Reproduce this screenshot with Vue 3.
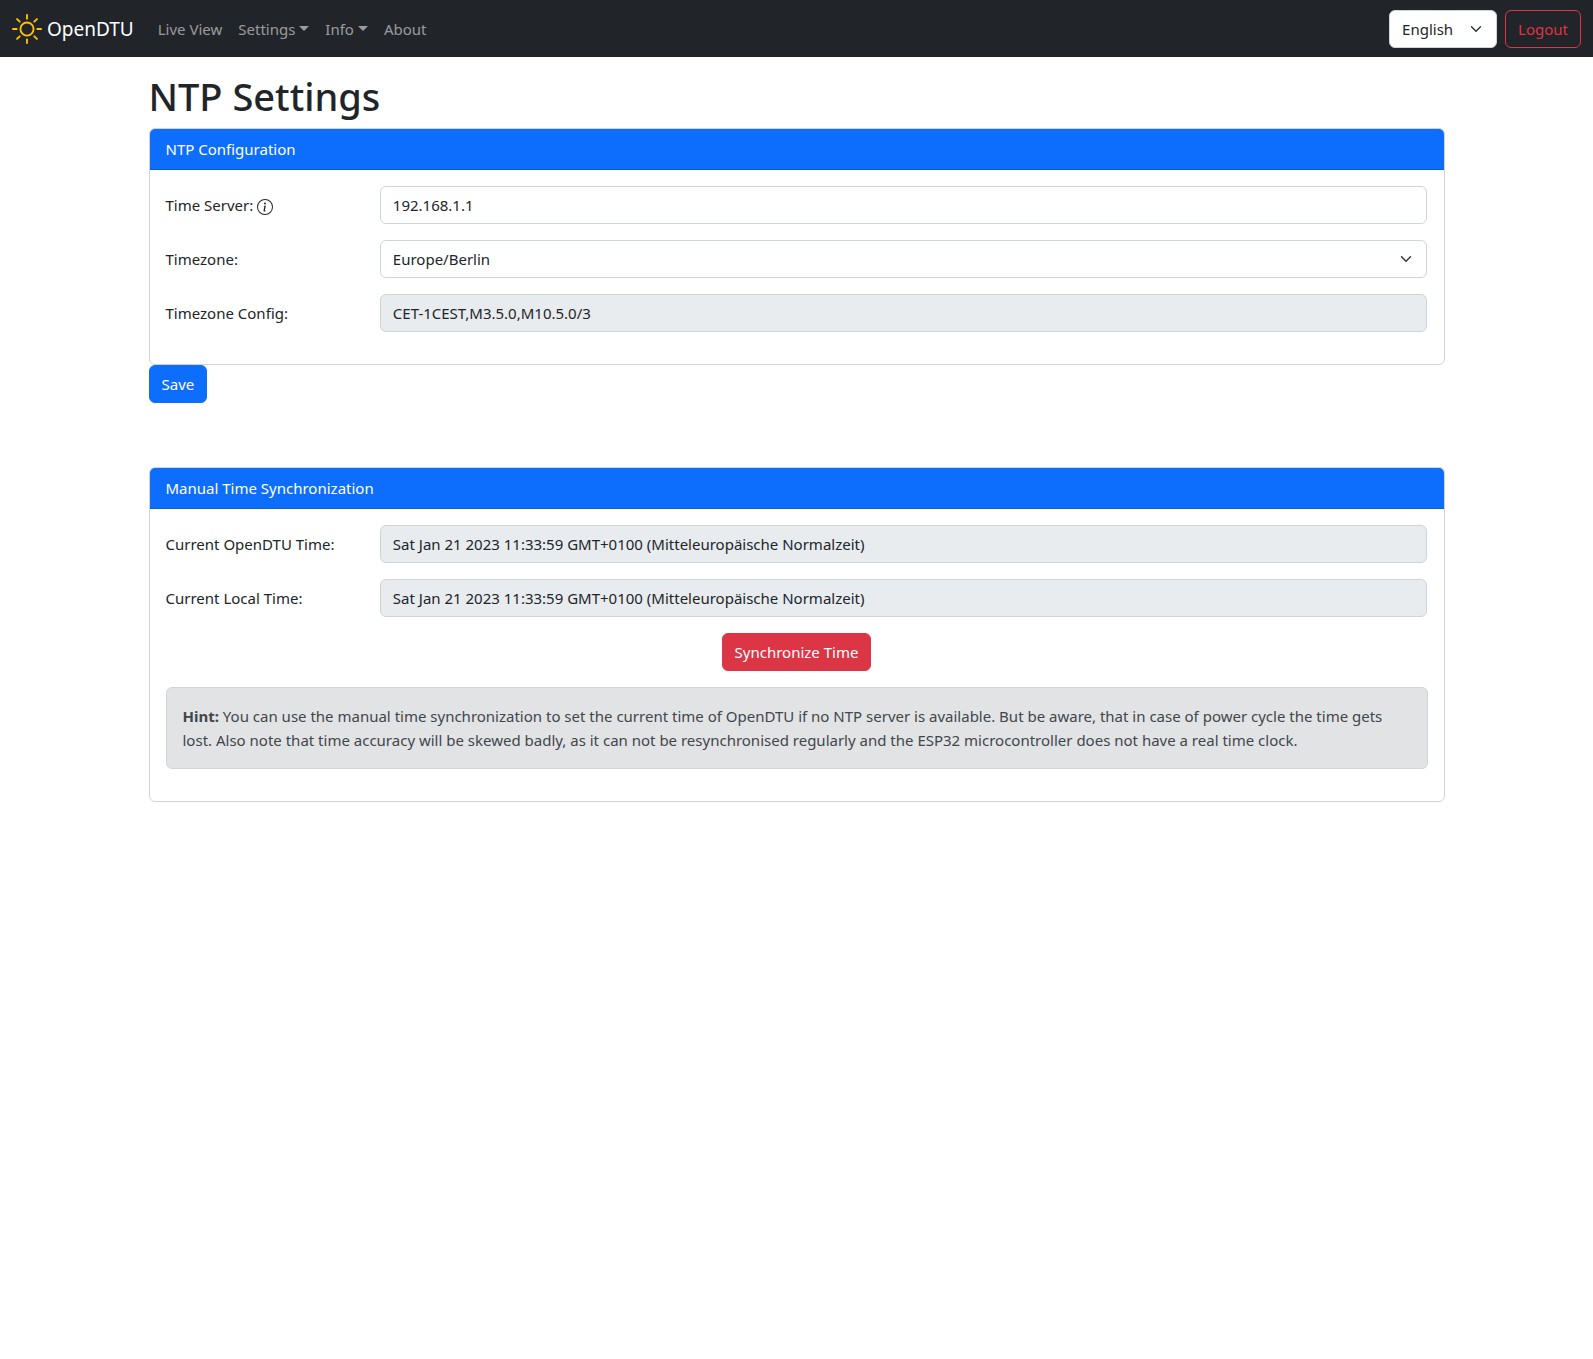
<script setup>
import { ref } from 'vue'

const language = ref('en')
const timeServer = ref('192.168.1.1')
const timezone = ref('Europe/Berlin')
const timezoneConfig = ref('CET-1CEST,M3.5.0,M10.5.0/3')
const deviceTime = ref('Sat Jan 21 2023 11:33:59 GMT+0100 (Mitteleuropäische Normalzeit)')
const localTime = ref('Sat Jan 21 2023 11:33:59 GMT+0100 (Mitteleuropäische Normalzeit)')

const links = [
  { label: 'Live View', menu: false },
  { label: 'Settings', menu: true },
  { label: 'Info', menu: true },
  { label: 'About', menu: false },
]
</script>

<template>
  <nav class="navbar">
    <a class="brand" href="#">
      <svg class="sun" viewBox="0 0 16 16" fill="currentColor" aria-hidden="true">
        <path d="M8 11a3 3 0 1 1 0-6 3 3 0 0 1 0 6zm0 1a4 4 0 1 0 0-8 4 4 0 0 0 0 8zM8 0a.5.5 0 0 1 .5.5v2a.5.5 0 0 1-1 0v-2A.5.5 0 0 1 8 0zm0 13a.5.5 0 0 1 .5.5v2a.5.5 0 0 1-1 0v-2A.5.5 0 0 1 8 13zm8-5a.5.5 0 0 1-.5.5h-2a.5.5 0 0 1 0-1h2a.5.5 0 0 1 .5.5zM3 8a.5.5 0 0 1-.5.5h-2a.5.5 0 0 1 0-1h2A.5.5 0 0 1 3 8zm10.657-5.657a.5.5 0 0 1 0 .707l-1.414 1.415a.5.5 0 1 1-.707-.708l1.414-1.414a.5.5 0 0 1 .707 0zm-9.193 9.193a.5.5 0 0 1 0 .707L3.05 13.657a.5.5 0 0 1-.707-.707l1.414-1.414a.5.5 0 0 1 .707 0zm9.193 2.121a.5.5 0 0 1-.707 0l-1.414-1.414a.5.5 0 0 1 .707-.707l1.414 1.414a.5.5 0 0 1 0 .707zM4.464 4.465a.5.5 0 0 1-.707 0L2.343 3.05a.5.5 0 1 1 .707-.707l1.414 1.414a.5.5 0 0 1 0 .708z" />
      </svg>
      <span>OpenDTU</span>
    </a>
    <ul class="links">
      <li v-for="link in links" :key="link.label">
        <a href="#" :class="{ menu: link.menu }">{{ link.label }}</a>
      </li>
    </ul>
    <div class="actions">
      <select v-model="language" class="control select" aria-label="Language">
        <option value="en">English</option>
      </select>
      <button type="button" class="btn btn-outline">Logout</button>
    </div>
  </nav>

  <main class="container">
    <h1>NTP Settings</h1>

    <form @submit.prevent>
      <section class="card">
        <h2 class="card-header">NTP Configuration</h2>
        <div class="card-body">
          <div class="row">
            <label for="server">
              Time Server:
              <svg class="info" viewBox="0 0 16 16" fill="currentColor" aria-hidden="true">
                <path d="M8 15A7 7 0 1 1 8 1a7 7 0 0 1 0 14zm0 1A8 8 0 1 0 8 0a8 8 0 0 0 0 16z" />
                <path d="m8.930 6.588-2.290.287-.082.380.450.083c.294.070.352.176.288.469l-.738 3.468c-.194.897.105 1.319.808 1.319.545 0 1.178-.252 1.465-.598l.088-.416c-.200.176-.492.246-.686.246-.275 0-.375-.193-.304-.533L8.930 6.588zM9 4.500a1 1 0 1 1-2 0 1 1 0 0 1 2 0z" />
              </svg>
            </label>
            <input id="server" v-model="timeServer" class="control" type="text">
          </div>
          <div class="row">
            <label for="zone">Timezone:</label>
            <select id="zone" v-model="timezone" class="control select">
              <option>Europe/Berlin</option>
            </select>
          </div>
          <div class="row">
            <label for="zone-config">Timezone Config:</label>
            <input id="zone-config" v-model="timezoneConfig" class="control" type="text" disabled>
          </div>
        </div>
      </section>
      <button type="submit" class="btn btn-primary">Save</button>
    </form>

    <section class="card manual">
      <h2 class="card-header">Manual Time Synchronization</h2>
      <div class="card-body">
        <div class="row">
          <label for="device-time">Current OpenDTU Time:</label>
          <input id="device-time" v-model="deviceTime" class="control" type="text" disabled>
        </div>
        <div class="row">
          <label for="local-time">Current Local Time:</label>
          <input id="local-time" v-model="localTime" class="control" type="text" disabled>
        </div>
        <div class="center">
          <button type="button" class="btn btn-danger">Synchronize Time</button>
        </div>
        <div class="alert" role="alert">
          <b>Hint:</b> You can use the manual time synchronization to set the current time of OpenDTU if no NTP server is available. But be aware, that in case of power cycle the time gets lost. Also note that time accuracy will be skewed badly, as it can not be resynchronised regularly and the ESP32 microcontroller does not have a real time clock.
        </div>
      </div>
    </section>
  </main>
</template>

<style>
body {
  margin: 0;
  background: #fff;
  color: #212529;
  font-family: "Segoe UI", "Noto Sans", "Open Sans", sans-serif;
  font-size: 15px;
  line-height: 24px;
}

*,
*::before,
*::after {
  box-sizing: border-box;
}
</style>

<style scoped>
.navbar {
  display: flex;
  align-items: center;
  min-height: 57px;
  padding: 8px 12px;
  background: #212529;
}

.brand {
  display: flex;
  align-items: center;
  gap: 5px;
  margin-right: 16px;
  color: #fff;
  font-size: 19px;
  text-decoration: none;
}

.sun {
  width: 30px;
  height: 30px;
  color: #ffc107;
}

.links {
  display: flex;
  flex: 1;
  margin: 0;
  padding: 0;
  list-style: none;
}

.links a {
  display: block;
  padding: 8px;
  color: rgba(255, 255, 255, 0.55);
  text-decoration: none;
}

.menu::after {
  display: inline-block;
  margin-left: 4px;
  border-top: 5px solid;
  border-right: 5px solid transparent;
  border-left: 5px solid transparent;
  vertical-align: 4px;
  content: "";
}

.actions {
  display: flex;
  gap: 8px;
}

.actions .select {
  width: 108px;
}

.container {
  max-width: 1320px;
  margin: 0 auto;
  padding: 15px 12px 0;
}

h1 {
  margin: 0 0 8px;
  font-size: 38px;
  font-weight: 500;
  line-height: 48px;
}

.card {
  border: 1px solid #d2d3d4;
  border-radius: 6px;
}

.manual {
  margin-top: 64px;
}

.card-header {
  margin: 0;
  padding: 8px 16px;
  border-bottom: 1px solid #0b5ed7;
  border-radius: 5px 5px 0 0;
  background: #0d6efd;
  color: #fff;
  font-size: 15px;
  font-weight: 400;
  line-height: 24px;
}

.card-body {
  padding: 16px;
}

.row {
  display: grid;
  grid-template-columns: repeat(12, 1fr);
  column-gap: 24px;
  margin-bottom: 16px;
}

.row label {
  grid-column: span 2;
  padding: 7px 0;
  white-space: nowrap;
}

.row .control {
  grid-column: span 10;
}

.info {
  width: 16px;
  height: 16px;
  vertical-align: -4px;
}

.control {
  width: 100%;
  height: 38px;
  margin: 0;
  padding: 6px 12px;
  border: 1px solid #ced4da;
  border-radius: 6px;
  background: #fff;
  color: #212529;
  font: inherit;
}

.control:disabled {
  background: #e9ecef;
  opacity: 1;
}

.select {
  padding-right: 36px;
  background: #fff url("data:image/svg+xml,%3csvg xmlns='http://www.w3.org/2000/svg' viewBox='0 0 16 16'%3e%3cpath fill='none' stroke='%23343a40' stroke-linecap='round' stroke-linejoin='round' stroke-width='2' d='m2 5 6 6 6-6'/%3e%3c/svg%3e") no-repeat right 12px center / 16px 12px;
  appearance: none;
}

.btn {
  display: block;
  height: 38px;
  padding: 6px 12px;
  border: 1px solid transparent;
  border-radius: 6px;
  color: #fff;
  font: inherit;
  cursor: pointer;
}

.btn-primary {
  border-color: #0d6efd;
  background: #0d6efd;
}

.btn-danger {
  border-color: #dc3545;
  background: #dc3545;
}

.btn-outline {
  border-color: #dc3545;
  background: transparent;
  color: #dc3545;
}

.center {
  display: flex;
  justify-content: center;
  margin-bottom: 16px;
}

.alert {
  margin-bottom: 16px;
  padding: 16px 24px 16px 16px;
  border: 1px solid #d3d6d8;
  border-radius: 6px;
  background: #e2e3e5;
  color: #41464b;
}
</style>
